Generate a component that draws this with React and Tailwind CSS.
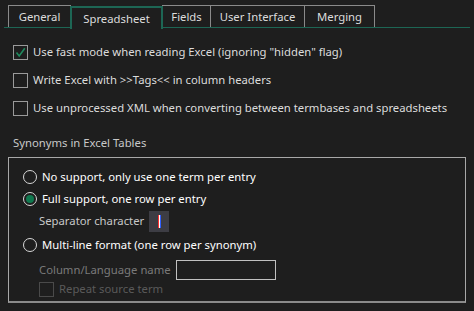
import React from 'react';

const TABS = ['General', 'Spreadsheet', 'Fields', 'User Interface', 'Merging'];
const TAB_W = { General: 'w-[63px]', Spreadsheet: 'w-[93px]', Fields: 'w-[49px]', 'User Interface': 'w-[95px]', Merging: 'w-[71px]' };

function Check({ on, dim }) {
  return (
    <span className={`w-[15px] h-[15px] border ${dim ? 'border-[#4a4a4a]' : 'border-[#9a9a9a]'} flex items-center justify-center shrink-0`}>
      {on && (
        <svg width="13" height="13" viewBox="0 0 13 13">
          <path d="M2.5 6.5 L5.2 10 L10.8 2.2" fill="none" stroke="#1f8a5e" strokeWidth="1.6" />
        </svg>
      )}
    </span>
  );
}

function Radio({ on }) {
  return (
    <span className="w-[14px] h-[14px] rounded-full border-[1.5px] border-[#d8d8d8] flex items-center justify-center shrink-0">
      {on && <span className="w-[8px] h-[8px] rounded-full bg-[#10794f]" />}
    </span>
  );
}

export default function App() {
  return (
    <div className="w-[474px] h-[311px] bg-[#1e1e1e] text-[11.3px] text-[#dcdcdc] overflow-hidden" style={{ fontFamily: '"Noto Sans", sans-serif' }}>
      {/* TABS */}
      <div className="flex pt-[5px] pl-[6px] mr-[4px] ml-[4px] border-b border-[#1d6654] h-[28px]">
        <div className="flex -ml-[4px] pl-[2px]">
          {TABS.map(t => (
            <div key={t}
              className={`${TAB_W[t]} h-[22px] pt-px flex items-center justify-center border border-b-0 ${t === 'Spreadsheet' ? 'border-[#1d6654] h-[23px] border-2 border-b-0 relative top-[1px] bg-[#1e1e1e]' : 'border-[#8a8a8a]'} -ml-px first:ml-0`}>
              {t}
            </div>
          ))}
        </div>
      </div>

      {/* CHECKBOXES */}
      <div className="pl-[13px] pt-[17px] flex flex-col gap-[13px]">
        <label className="flex items-center gap-[5px] h-[15px]"><Check on />Use fast mode when reading Excel (ignoring "hidden" flag)</label>
        <label className="flex items-center gap-[5px] h-[15px]"><Check />Write Excel with &gt;&gt;Tags&lt;&lt; in column headers</label>
        <label className="flex items-center gap-[5px] h-[15px]"><Check />Use unprocessed XML when converting between termbases and spreadsheets</label>
      </div>

      {/* SYNONYMS */}
      <div className="pl-[13px] pt-[19px] text-[#c8c8c8] h-[41px]">Synonyms in Excel Tables</div>
      <div className="ml-[8px] mr-[8px] h-[146px] border border-[#a8a8a8] border-b-2 border-b-[#8a8a8a] pl-[14px] pt-[11px] text-white">
        <label className="flex items-center gap-[5px] h-[16px]"><Radio />No support, only use one term per entry</label>
        <label className="flex items-center gap-[5px] h-[16px] mt-[6px]"><Radio on />Full support, one row per entry</label>
        <div className="flex items-center gap-[5px] ml-[16px] mt-[4px] h-[21px] text-[#c8c8c8]">
          Separator character
          <span className="w-[20px] h-[21px] bg-[#3d3d44] flex items-center justify-center">
            <span className="flex h-[13px]">
              <span className="w-px bg-[#ff3030]" />
              <span className="w-px bg-white" />
              <span className="w-px bg-[#3060ff]" />
            </span>
          </span>
        </div>
        <label className="flex items-center gap-[5px] h-[16px] mt-[5px]"><Radio />Multi-line format (one row per synonym)</label>
        <div className="flex items-center gap-[5px] ml-[16px] mt-[7px] h-[20px] text-[#7a7a7a]">
          Column/Language name
          <span className="w-[100px] h-[20px] border border-[#c0c0c0]" />
        </div>
        <label className="flex items-center gap-[5px] ml-[16px] mt-[2px] text-[#5a5a5a] h-[15px]"><Check dim />Repeat source term</label>
      </div>
    </div>
  );
}
